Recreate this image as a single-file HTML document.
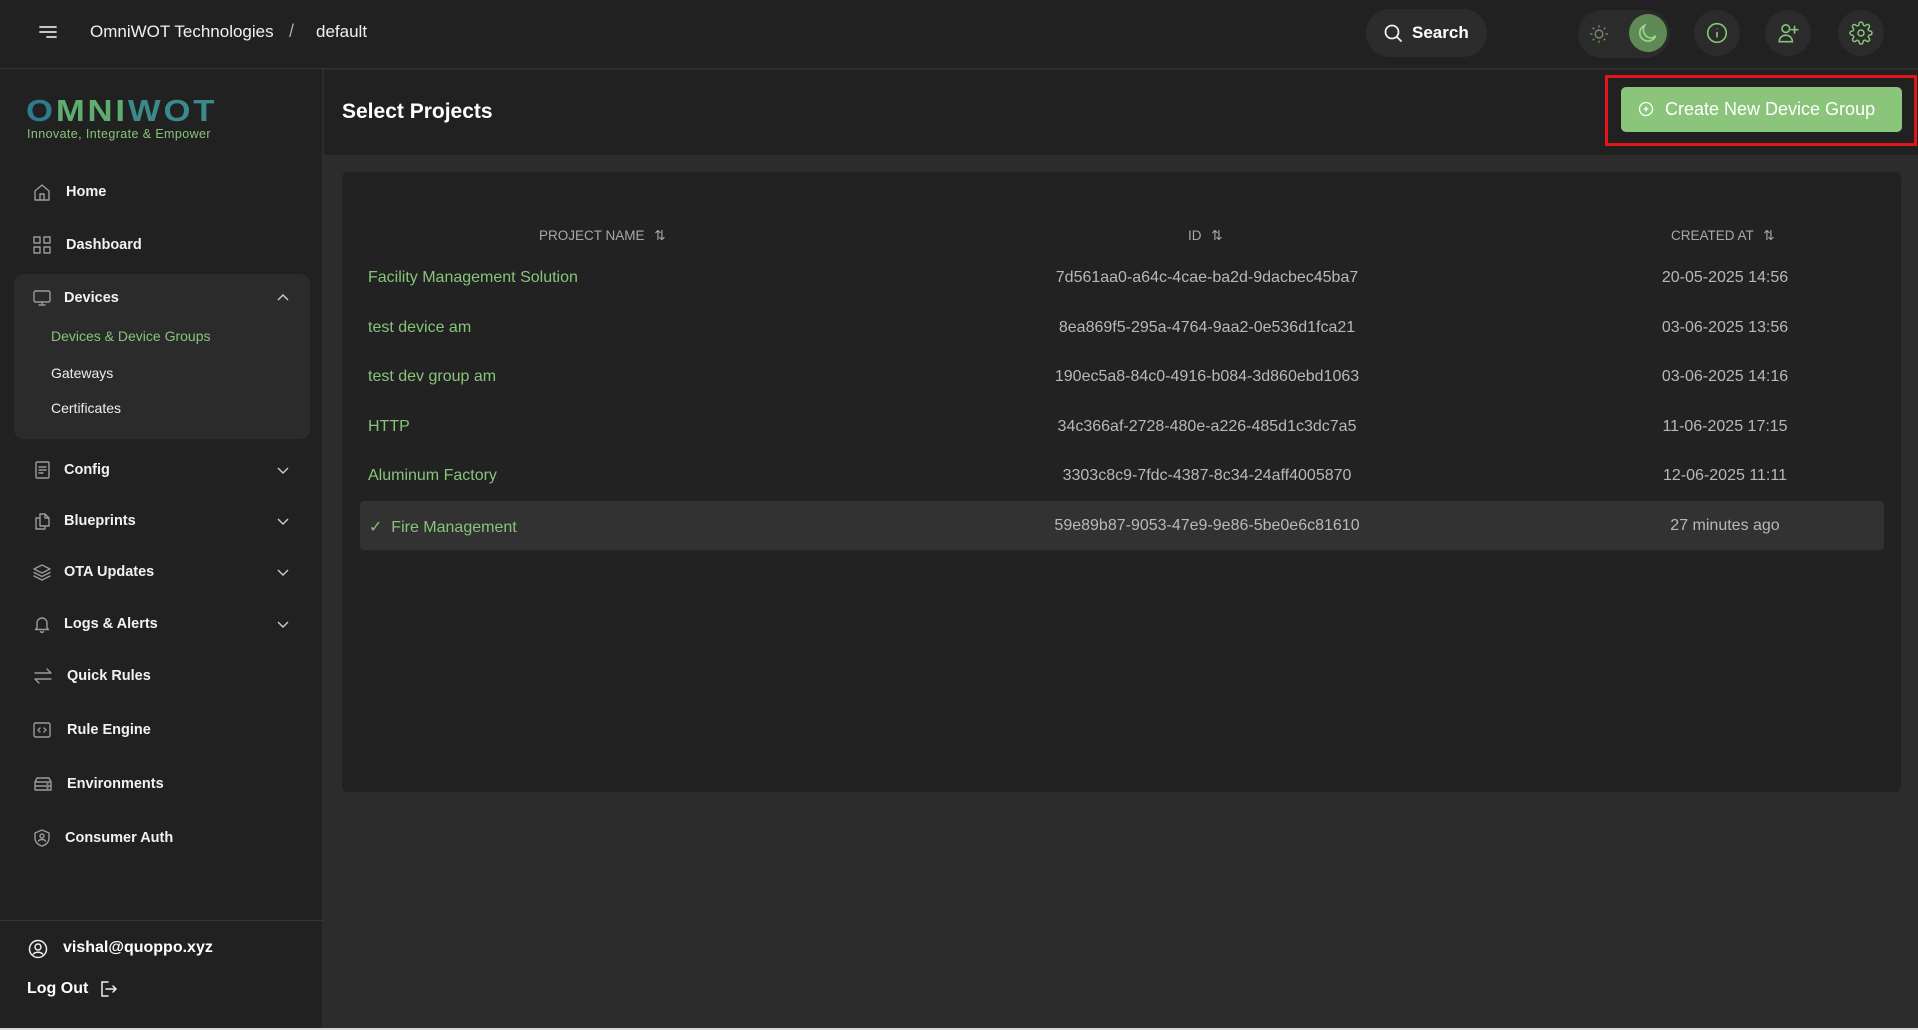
<!DOCTYPE html>
<html><head><meta charset="utf-8"><style>
*{box-sizing:border-box;margin:0;padding:0}
body{width:1918px;height:1030px;overflow:hidden;background:#2c2c2c;font-family:"Liberation Sans",sans-serif;color:#fff;position:relative}
.abs{position:absolute}
#top{left:0;top:0;width:1918px;height:69px;background:#212121;border-bottom:1px solid #333}
#side{left:0;top:69px;width:323px;height:959px;background:#212121;border-right:1px solid #2e2e2e}
.nav{position:absolute;left:0;width:323px;height:30px;display:flex;align-items:center;font-size:14.5px;font-weight:bold;color:#f2f2f2}
.nav svg{position:absolute;left:32px}
.nav span{position:absolute;left:66px}
.nav .chev{left:276px}
.sub{position:absolute;left:51px;font-size:14px;color:#eee}
.ic{stroke:#9a9a9a;fill:none;stroke-width:1.4;stroke-linecap:round;stroke-linejoin:round}
.g{color:#86c47a}
.row{position:absolute;left:360px;width:1524px;height:49px;font-size:16px}
.row .n{position:absolute;left:8px;top:17px;color:#86c47a}
.row .i{position:absolute;left:847px;width:0;top:17px;color:#b8b8b8;white-space:nowrap;display:flex;justify-content:center}
.row .c{position:absolute;left:1365px;width:0;top:17px;color:#b8b8b8;white-space:nowrap;display:flex;justify-content:center}
.hd{position:absolute;top:228px;font-size:13.5px;color:#a8a8a8;white-space:nowrap}
.circ{position:absolute;width:46px;height:46px;border-radius:50%;background:#2b2b2b;top:10px;display:flex;align-items:center;justify-content:center}
</style></head><body>
<div id="top" class="abs">
  <svg class="abs" style="left:38px;top:24px" width="20" height="16" viewBox="0 0 20 16"><path d="M2 3h16M2 8h16M9 13h9" stroke="#ddd" stroke-width="1.8" stroke-linecap="round"/></svg>
  <div class="abs" style="left:90px;top:22px;font-size:17px;color:#f0f0f0">OmniWOT Technologies</div>
  <div class="abs" style="left:289px;top:21px;font-size:18px;color:#aaa">/</div>
  <div class="abs" style="left:316px;top:22px;font-size:17px;color:#f0f0f0">default</div>
  <div class="abs" style="left:1366px;top:9px;width:121px;height:48px;border-radius:24px;background:#2c2c2c"></div>
  <svg class="abs" style="left:1383px;top:23px" width="20" height="20" viewBox="0 0 20 20"><circle cx="9" cy="9" r="6.5" stroke="#eee" stroke-width="1.8" fill="none"/><path d="M14 14l4 4" stroke="#eee" stroke-width="1.8" stroke-linecap="round"/></svg>
  <div class="abs" style="left:1412px;top:23px;font-size:17px;font-weight:bold">Search</div>
  <div class="abs" style="left:1578px;top:10px;width:92px;height:48px;border-radius:24px;background:#2b2b2b"></div>
  <svg class="abs" style="left:1588px;top:23px" width="22" height="22" viewBox="0 0 20 20" stroke="#6f8f66" stroke-width="1.3" fill="none"><circle cx="10" cy="10" r="3.5"/><path d="M10 2v2M10 16v2M2 10h2M16 10h2M4.3 4.3l1.4 1.4M14.3 14.3l1.4 1.4M4.3 15.7l1.4-1.4M14.3 5.7l1.4-1.4"/></svg>
  <div class="abs" style="left:1629px;top:14px;width:38px;height:38px;border-radius:50%;background:#5f8a55"></div>
  <svg class="abs" style="left:1636px;top:21px" width="24" height="24" viewBox="0 0 22 22"><path d="M15 15.5A7.5 7.5 0 0 1 8 4a7.5 7.5 0 1 0 10 9.5a7 7 0 0 1-3 2z" stroke="#9fd68f" stroke-width="1.5" fill="none"/></svg>
  <div class="circ" style="left:1694px"><svg width="24" height="24" viewBox="0 0 22 22" stroke="#86c47a" stroke-width="1.5" fill="none"><circle cx="11" cy="11" r="8.5"/><path d="M11 10v5M11 7v.5"/></svg></div>
  <div class="circ" style="left:1765px"><svg width="24" height="24" viewBox="0 0 22 22" stroke="#86c47a" stroke-width="1.5" fill="none" stroke-linecap="round"><circle cx="9" cy="7" r="3.5"/><path d="M3 19c0-4 3-6 6-6s6 2 6 6zM17 5v6M14 8h6"/></svg></div>
  <div class="circ" style="left:1838px"><svg width="24" height="24" viewBox="0 0 24 24" stroke="#86c47a" stroke-width="1.5" fill="none"><circle cx="12" cy="12" r="3"/><path d="M19.4 15a1.7 1.7 0 0 0 .3 1.8l.1.1a2 2 0 1 1-2.8 2.8l-.1-.1a1.7 1.7 0 0 0-1.8-.3 1.7 1.7 0 0 0-1 1.5V21a2 2 0 1 1-4 0v-.1a1.7 1.7 0 0 0-1.1-1.5 1.7 1.7 0 0 0-1.8.3l-.1.1a2 2 0 1 1-2.8-2.8l.1-.1a1.7 1.7 0 0 0 .3-1.8 1.7 1.7 0 0 0-1.5-1H3a2 2 0 1 1 0-4h.1a1.7 1.7 0 0 0 1.5-1.1 1.7 1.7 0 0 0-.3-1.8l-.1-.1a2 2 0 1 1 2.8-2.8l.1.1a1.7 1.7 0 0 0 1.8.3H9a1.7 1.7 0 0 0 1-1.5V3a2 2 0 1 1 4 0v.1a1.7 1.7 0 0 0 1 1.5 1.7 1.7 0 0 0 1.8-.3l.1-.1a2 2 0 1 1 2.8 2.8l-.1.1a1.7 1.7 0 0 0-.3 1.8V9a1.7 1.7 0 0 0 1.5 1H21a2 2 0 1 1 0 4h-.1a1.7 1.7 0 0 0-1.5 1z"/></svg></div>
</div>

<div id="side" class="abs">
  <div class="abs" style="left:26px;top:27px;font-size:31px;font-weight:900;letter-spacing:2.5px;line-height:30px;color:#5fae70;transform:scaleX(1.12);transform-origin:left"><span style="color:#2d7c8c">O</span>MNI<span style="color:#3a8a8c">WOT</span></div>
  <div class="abs" style="left:27px;top:58px;font-size:12.5px;color:#86c47a;letter-spacing:.4px">Innovate, Integrate &amp; Empower</div>
</div>
<div class="abs" style="left:0;top:69px;width:323px;height:959px">
  <div class="nav" style="top:108px"><svg width="20" height="20" viewBox="0 0 20 20" class="ic"><path d="M3 9l7-6 7 6v9H3zM8 18v-6h4v6"/></svg><span>Home</span></div>
  <div class="nav" style="top:161px"><svg width="20" height="20" viewBox="0 0 20 20" class="ic"><rect x="2" y="2" width="6" height="6"/><rect x="12" y="2" width="6" height="6"/><rect x="2" y="12" width="6" height="6"/><rect x="12" y="12" width="6" height="6"/></svg><span>Dashboard</span></div>
  <div class="abs" style="left:14px;top:205px;width:296px;height:165px;border-radius:10px;background:#2b2b2b"></div>
  <div class="nav" style="top:214px"><svg width="20" height="20" viewBox="0 0 20 20" class="ic"><rect x="2" y="3" width="16" height="11" rx="1.5"/><path d="M10 14v3M7 17h6"/></svg><span style="left:64px">Devices</span><svg class="chev" width="14" height="14" viewBox="0 0 14 14"><path d="M2 9l5-5 5 5" stroke="#ccc" stroke-width="1.4" fill="none"/></svg></div>
  <div class="sub g" style="top:259px">Devices &amp; Device Groups</div>
  <div class="sub" style="top:296px">Gateways</div>
  <div class="sub" style="top:331px">Certificates</div>
  <div class="nav" style="top:386px"><svg width="20" height="20" viewBox="0 0 20 20" class="ic"><rect x="4" y="2" width="13" height="16" rx="1"/><path d="M7 7h7M7 10h7M7 13h4"/></svg><span style="left:64px">Config</span><svg class="chev" width="14" height="14" viewBox="0 0 14 14"><path d="M2 5l5 5 5-5" stroke="#ccc" stroke-width="1.4" fill="none"/></svg></div>
  <div class="nav" style="top:437px"><svg width="20" height="20" viewBox="0 0 20 20" class="ic"><path d="M8 3h5l4 4v8H8zM13 3v4h4M8 7H4v11h9v-3"/></svg><span style="left:64px">Blueprints</span><svg class="chev" width="14" height="14" viewBox="0 0 14 14"><path d="M2 5l5 5 5-5" stroke="#ccc" stroke-width="1.4" fill="none"/></svg></div>
  <div class="nav" style="top:488px"><svg width="20" height="20" viewBox="0 0 20 20" class="ic"><path d="M10 3l8 4-8 4-8-4zM2 10.5l8 4 8-4M2 14l8 4 8-4"/></svg><span style="left:64px">OTA Updates</span><svg class="chev" width="14" height="14" viewBox="0 0 14 14"><path d="M2 5l5 5 5-5" stroke="#ccc" stroke-width="1.4" fill="none"/></svg></div>
  <div class="nav" style="top:540px"><svg width="20" height="20" viewBox="0 0 20 20" class="ic"><path d="M5 14V9a5 5 0 0 1 10 0v5l1.5 1.5h-13zM8.5 17.5a1.7 1.7 0 0 0 3 0"/></svg><span style="left:64px">Logs &amp; Alerts</span><svg class="chev" width="14" height="14" viewBox="0 0 14 14"><path d="M2 5l5 5 5-5" stroke="#ccc" stroke-width="1.4" fill="none"/></svg></div>
  <div class="nav" style="top:592px"><svg width="22" height="20" viewBox="0 0 22 20" class="ic"><path d="M3 7h16l-4-4M19 13H3l4 4"/></svg><span style="left:67px">Quick Rules</span></div>
  <div class="nav" style="top:646px"><svg width="20" height="20" viewBox="0 0 20 20" class="ic"><rect x="2" y="3" width="16" height="14" rx="1.5"/><path d="M8 8l-2 2 2 2M12 8l2 2-2 2"/></svg><span style="left:67px">Rule Engine</span></div>
  <div class="nav" style="top:700px"><svg width="22" height="20" viewBox="0 0 22 20" class="ic"><path d="M3 8l2-4h12l2 4zM3 8h16v4H3zM3 12h16v4H3zM15 10h1M15 14h1"/></svg><span style="left:67px">Environments</span></div>
  <div class="nav" style="top:754px"><svg width="20" height="20" viewBox="0 0 20 20" class="ic"><path d="M10 2l7 3v5c0 4-3 7-7 8-4-1-7-4-7-8V5z"/><circle cx="10" cy="8" r="2"/><path d="M6.5 13c1-2 6-2 7 0"/></svg><span style="left:65px">Consumer Auth</span></div>
  <div class="abs" style="left:0;top:851px;width:323px;border-top:1px solid #333"></div>
  <svg class="abs" style="left:28px;top:870px" width="20" height="20" viewBox="0 0 20 20" stroke="#eee" stroke-width="1.5" fill="none"><circle cx="10" cy="10" r="8.5"/><circle cx="10" cy="8" r="3"/><path d="M5 15.5c2-3 8-3 10 0"/></svg>
  <div class="abs" style="left:63px;top:870px;font-size:16px;font-weight:bold">vishal@quoppo.xyz</div>
  <div class="abs" style="left:27px;top:911px;font-size:16px;font-weight:bold">Log Out</div>
  <svg class="abs" style="left:98px;top:910px" width="20" height="20" viewBox="0 0 20 20" stroke="#eee" stroke-width="1.5" fill="none" stroke-linecap="round"><path d="M10 3H4v14h6M8 10h10M15 7l3 3-3 3"/></svg>
</div>

<div class="abs" style="left:324px;top:70px;width:1594px;height:85px;background:#212121"></div>
<div class="abs" style="left:342px;top:100px;font-size:21px;font-weight:bold">Select Projects</div>
<div class="abs" style="left:1605px;top:75px;width:312px;height:71px;border:3px solid #e0161b"></div>
<div class="abs" style="left:1621px;top:87px;width:281px;height:45px;border-radius:5px;background:#8bc57b"></div>
<svg class="abs" style="left:1638px;top:101px" width="16" height="16" viewBox="0 0 16 16" stroke="#fff" stroke-width="1.3" fill="none"><circle cx="8" cy="8" r="6.5"/><path d="M8 5.5v5M5.5 8h5"/></svg>
<div class="abs" style="left:1665px;top:99px;font-size:18px;color:#fff">Create New Device Group</div>

<div class="abs" style="left:342px;top:172px;width:1559px;height:620px;border-radius:6px;background:#222"></div>
<div class="hd" style="left:539px">PROJECT NAME <span style="margin-left:6px">⇅</span></div>
<div class="hd" style="left:1188px">ID <span style="margin-left:6px">⇅</span></div>
<div class="hd" style="left:1671px">CREATED AT <span style="margin-left:6px">⇅</span></div>

<div class="row" style="top:252px"><div class="n">Facility Management Solution</div><div class="i">7d561aa0-a64c-4cae-ba2d-9dacbec45ba7</div><div class="c">20-05-2025 14:56</div></div>
<div class="row" style="top:302px"><div class="n">test device am</div><div class="i">8ea869f5-295a-4764-9aa2-0e536d1fca21</div><div class="c">03-06-2025 13:56</div></div>
<div class="row" style="top:351px"><div class="n">test dev group am</div><div class="i">190ec5a8-84c0-4916-b084-3d860ebd1063</div><div class="c">03-06-2025 14:16</div></div>
<div class="row" style="top:401px"><div class="n">HTTP</div><div class="i">34c366af-2728-480e-a226-485d1c3dc7a5</div><div class="c">11-06-2025 17:15</div></div>
<div class="row" style="top:450px"><div class="n">Aluminum Factory</div><div class="i">3303c8c9-7fdc-4387-8c34-24aff4005870</div><div class="c">12-06-2025 11:11</div></div>
<div class="row" style="top:501px;background:#323232;border-radius:4px"><div class="n" style="left:9px;top:16px;color:#86c47a">✓&nbsp; Fire Management</div><div class="i" style="top:16px">59e89b87-9053-47e9-9e86-5be0e6c81610</div><div class="c" style="top:16px">27 minutes ago</div></div>

<div class="abs" style="left:0;top:1028px;width:1918px;height:2px;background:#d8d8d8"></div>
</body></html>
